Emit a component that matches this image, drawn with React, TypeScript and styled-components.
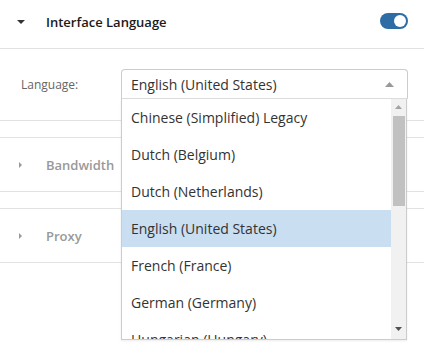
import React from "react";
import styled, { createGlobalStyle } from "styled-components";

const GlobalStyle = createGlobalStyle`
  html, body { margin: 0; padding: 0; background: #fff; }
  body { font-family: "Open Sans", "Noto Sans", sans-serif; }
`;

const Page = styled.div`
  position: relative;
  width: 424px;
  height: 349px;
  overflow: hidden;
  background: #fff;
`;

const Header = styled.div`
  display: flex;
  align-items: center;
  height: 43px;
  padding: 0 16px 5px 17px;
  border-bottom: 1px solid #e2e2e2;
`;

const Caret = styled.svg<{ $dir: "down" | "right" }>`
  flex: none;
  width: 8px;
  height: 8px;
  fill: ${(p) => (p.$dir === "down" ? "#333" : "#999")};
`;

const Title = styled.div<{ $muted?: boolean }>`
  flex: 1;
  margin-left: 21px;
  font-size: 13px;
  font-weight: 600;
  color: ${(p) => (p.$muted ? "#999" : "#1a1a1a")};
`;

const Toggle = styled.div`
  position: relative;
  width: 28px;
  height: 16px;
  margin-bottom: 2px;
  border-radius: 8px;
  background: #2d6ca5;
`;

const Knob = styled.div`
  position: absolute;
  right: 2px;
  top: 2px;
  width: 12px;
  height: 12px;
  border-radius: 50%;
  background: #fff;
`;

const Body = styled.div`
  display: flex;
  align-items: flex-start;
  height: 72px;
  padding: 20px 0 0 21px;
  box-sizing: border-box;
  border-bottom: 1px solid #e2e2e2;
`;

const Label = styled.div`
  width: 100px;
  line-height: 31px;
  font-size: 12px;
  color: #666;
`;

const SelectWrap = styled.div`
  position: relative;
  width: 287px;
`;

const SelectBox = styled.div`
  display: flex;
  align-items: center;
  justify-content: space-between;
  height: 30px;
  padding: 1px 13px 0 9px;
  box-sizing: border-box;
  border: 1px solid #ccc;
  border-bottom: 1px solid #ddd;
  border-radius: 4px 4px 0 0;
  font-size: 14px;
  color: #333;
`;

const Arrow = styled.svg`
  width: 9px;
  height: 5px;
  fill: #999;
`;

const List = styled.div`
  position: absolute;
  left: 0;
  top: 30px;
  width: 286px;
  height: 241px;
  box-sizing: border-box;
  border: 1px solid #ccc;
  border-top: none;
  background: #fff;
  overflow: hidden;
  box-shadow: 0 1px 2px rgba(0, 0, 0, 0.08);
  z-index: 2;
`;

const Item = styled.div<{ $selected?: boolean }>`
  height: 37px;
  line-height: 37px;
  padding-left: 9px;
  margin-right: 15px;
  font-size: 14px;
  color: #333;
  white-space: nowrap;
  background: ${(p) => (p.$selected ? "#c9def1" : "transparent")};
`;

const ScrollTrack = styled.div`
  position: absolute;
  top: 0;
  right: 0;
  bottom: 0;
  width: 15px;
  background: #f1f1f1;
`;

const ScrollThumb = styled.div`
  position: absolute;
  top: 17px;
  left: 2px;
  width: 12px;
  height: 90px;
  background: #c1c1c1;
`;

const ScrollArrow = styled.svg<{ $pos: "top" | "bottom" }>`
  position: absolute;
  left: 4px;
  ${(p) => (p.$pos === "top" ? "top: 6px;" : "bottom: 8px;")}
  width: 7px;
  height: 4px;
  fill: ${(p) => (p.$pos === "top" ? "#a3a3a3" : "#505050")};
`;

const Gap = styled.div`
  height: 16px;
`;

const Panel = styled.div`
  display: flex;
  align-items: center;
  height: 53px;
  padding-left: 17px;
  border-top: 1px solid #e2e2e2;
  border-bottom: 1px solid #e2e2e2;
`;

const languages = [
  "Chinese (Simplified) Legacy",
  "Dutch (Belgium)",
  "Dutch (Netherlands)",
  "English (United States)",
  "French (France)",
  "German (Germany)",
  "Hungarian (Hungary)",
];

export default function App() {
  return (
    <Page>
      <GlobalStyle />
      <Header>
        <Caret $dir="down" viewBox="0 0 8 8">
          <polygon points="0,2 8,2 4,6" />
        </Caret>
        <Title>Interface Language</Title>
        <Toggle>
          <Knob />
        </Toggle>
      </Header>
      <Body>
        <Label>Language:</Label>
        <SelectWrap>
          <SelectBox>
            <span>English (United States)</span>
            <Arrow viewBox="0 0 9 5">
              <polygon points="0,5 9,5 4.5,0" />
            </Arrow>
          </SelectBox>
          <List>
            {languages.map((l) => (
              <Item key={l} $selected={l === "English (United States)"}>
                {l}
              </Item>
            ))}
            <ScrollTrack>
              <ScrollArrow $pos="top" viewBox="0 0 7 4">
                <polygon points="0,4 7,4 3.5,0" />
              </ScrollArrow>
              <ScrollThumb />
              <ScrollArrow $pos="bottom" viewBox="0 0 7 4">
                <polygon points="0,0 7,0 3.5,4" />
              </ScrollArrow>
            </ScrollTrack>
          </List>
        </SelectWrap>
      </Body>
      <Gap />
      <Panel>
        <Caret $dir="right" viewBox="0 0 8 8">
          <polygon points="2,1 5,4 2,7" />
        </Caret>
        <Title $muted>Bandwidth</Title>
      </Panel>
      <Gap />
      <Panel>
        <Caret $dir="right" viewBox="0 0 8 8">
          <polygon points="2,1 5,4 2,7" />
        </Caret>
        <Title $muted>Proxy</Title>
      </Panel>
    </Page>
  );
}
